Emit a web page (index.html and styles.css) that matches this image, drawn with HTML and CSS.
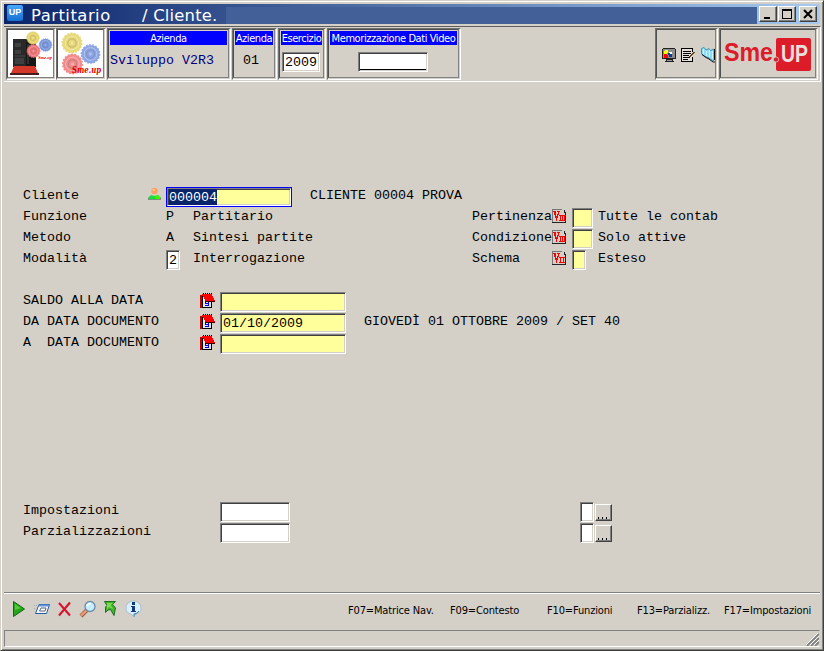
FILE: index.html
```html
<!DOCTYPE html>
<html lang="it">
<head>
<meta charset="utf-8">
<title>Partitario / Cliente.</title>
<link rel="stylesheet" href="styles.css">
</head>
<body>
<svg width="0" height="0" class="defs">
  <defs>
    <g id="gear">
      <circle r="9.8" fill="none" stroke="currentColor" stroke-width="1.4" stroke-dasharray="2 1.4"/>
      <circle r="9.7" fill="currentColor"/>
      <circle r="6.8" fill="none" stroke="#fff" stroke-opacity=".35"/>
      <circle r="4.2" fill="none" stroke="#555" stroke-opacity=".22" stroke-width="1.2"/>
      <circle r="1.5" fill="#fff" fill-opacity=".35"/>
    </g>
    <g id="vm" shape-rendering="crispEdges">
      <path d="M0 0H11L14 3V14H0Z" fill="#d4d0c8"/>
      <path d="M0 0H10V1H1V13H0Z" fill="#777"/>
      <path d="M12 1H13V3H14V14H0V13H13V4H12Z" fill="#222"/>
      <path d="M1 2H4V3H3V5H4V8H5V5H6V3H5V2H8V3H7V6H6V9H5V12H4V9H3V6H2V3H1Z" fill="#f00"/>
      <path d="M2 3H4V7H5V10H4V8H3V5H2Z" fill="#f00"/>
    </g>
    <path id="bars3" shape-rendering="crispEdges" fill="#f00" d="M7 6H14V7H13V11H14V12H7V11H8V7H7ZM9 7V11H10V7ZM11 7V11H12V7Z" fill-rule="evenodd"/>
    <path id="bars2" shape-rendering="crispEdges" fill="#f00" d="M7 6H13V7H12V11H13V12H7V11H8V7H7ZM9 7V11H11V7Z" fill-rule="evenodd"/>
    <g id="cal" shape-rendering="crispEdges">
      <path d="M0 2H2V15H0Z" fill="#c00000"/>
      <path d="M2 2H3V15H2ZM3 14H12V15H3ZM11 7H12V15H11ZM3 0H4V2H3ZM5 0H6V2H5ZM7 0H8V2H7ZM9 0H10V2H9ZM11 0H12V2H11Z" fill="#000"/>
      <path d="M3 4H11V14H3Z" fill="#e4e4e4"/>
      <path d="M2 1H12V3H13V5H14V7H15V8H5V6H4V4H3V3H2Z" fill="#f00"/>
      <path d="M5 8H15V9H5Z" fill="#300"/>
      <path d="M5 9H6V10H8V9H9V13H5V12H8V11H5Z" fill="#0000f0"/>
    </g>
  </defs>
</svg>
<div class="window">
  <header class="titlebar">
    <span class="up-icon">UP</span>
    <h1><span class="title-a">Partitario</span><span class="title-b">/ Cliente.</span></h1>
    <span class="title-space"></span>
    <button class="wbtn"><svg width="16" height="14"><path d="M4 10H10V12H4Z"/></svg></button>
    <button class="wbtn"><svg width="16" height="14"><path d="M3 2H13V12H3ZM4 4V11H12V4Z" fill-rule="evenodd"/></svg></button>
    <button class="wbtn close"><svg width="16" height="14"><path d="M4 3L12 11M12 3L4 11" fill="none" stroke="#000" stroke-width="2"/></svg></button>
  </header>

  <div class="toolbar">
    <div class="cell c1"><div class="inner white">
      <svg width="46" height="47" viewBox="0 0 46 47">
        <path d="M5 9H18V37H5Z" fill="#292929"/><path d="M18 9H28V37H18Z" fill="#171717"/>
        <path d="M7 13H13V17H7ZM7 20H13V24H7ZM7 28H16V34H7Z" fill="#404040"/><path d="M7 26H17M20 14V34" stroke="#4a4a4a"/>
        <path d="M6 36H27L30 43H3Z" fill="#d4382a"/><path d="M2 43H31V45H2Z" fill="#4b1c1c"/>
        <g color="#e5d36a" transform="translate(25 8) scale(.64)"><use href="#gear"/></g>
        <g color="#7896dc" transform="translate(37.500 15) scale(.64)"><use href="#gear"/></g>
        <g color="#ec7477" transform="translate(25.500 21) scale(.66)"><use href="#gear"/></g>
        <text x="30" y="29" textLength="14" lengthAdjust="spacingAndGlyphs" class="tiny-logo">Sme.up</text>
      </svg></div></div>
    <div class="cell c2"><div class="inner white">
      <svg width="46" height="47" viewBox="0 0 46 47">
        <g color="#e8d979" transform="translate(14 13)"><use href="#gear"/></g>
        <g color="#8da5e5" transform="translate(32.500 24) scale(.94)"><use href="#gear"/></g>
        <g color="#f28b8b" transform="translate(14.500 34)"><use href="#gear"/></g>
        <text x="14" y="43" textLength="29" lengthAdjust="spacingAndGlyphs" class="small-logo">Sme.up</text>
      </svg></div></div>
    <div class="cell c3"><div class="inner"><div class="cap">Azienda</div><div class="company">Sviluppo V2R3</div></div></div>
    <div class="cell c4"><div class="inner"><div class="cap">Azienda</div><div class="code">01</div></div></div>
    <div class="cell c5"><div class="inner"><div class="cap">Esercizio</div><div class="field year">2009</div></div></div>
    <div class="cell c6"><div class="inner"><div class="cap">Memorizzazione Dati Video</div><div class="field memo"></div></div></div>
    <div class="cell c7"><div class="inner tools">
      <svg width="14" height="14" shape-rendering="crispEdges"><path d="M1 0H13V1H14V11H11V13H12V14H3V13H4V11H0V1H1Z" fill="#222"/><path d="M1 1H13V10H1Z" fill="#8c8c8c"/><path d="M2 3H3V2H6V5H5V6H2Z" fill="#ff0"/><path d="M2 6H5V7H6V10H2Z" fill="#f00"/><path d="M6 5H8V6H10V9H7V7H6Z" fill="#003d99"/><path d="M7 4H10V6H8V5H7Z" fill="#fff"/><path d="M5 12H10V13H5Z" fill="#999"/></svg>
      <svg width="14" height="14" shape-rendering="crispEdges"><path d="M1 1H11V13H1Z" fill="#e5e1d9"/><path d="M0 0H12V4H11V1H1V13H11V9H12V14H0Z"/><path d="M2 3H10V4H2ZM2 5H10V6H2ZM2 7H8V8H2ZM2 9H9V10H2ZM2 11H7V12H2Z"/><path d="M12 4H14V5H13V6H12V7H11V8H10V9H8V8H9V7H10V6H11V5H12Z" fill="#6b4511"/></svg>
      <svg width="15" height="16"><path d="M.5 1.500L3 .5L5 3L8 1.500L9.500 3.500L13 2V13L12 14L8 11L4 9.500L.5 7Z" fill="#8fdcf8" stroke="#4394b4"/><path d="M2.500 2V7M5.500 4V9M8.500 3V10M11.500 4V12" stroke="#c9f3ff"/><path d="M1 7.500L5 10.500L8 12L12 15H14.500V12M13.500 2V13" fill="none" stroke="#111"/></svg>
    </div></div>
    <div class="cell c8"><div class="inner brand">
      <svg width="94" height="40"><rect x="52" y="3" width="35" height="33" rx="2" fill="#dc1d29"/><text x="0" y="26" textLength="49" lengthAdjust="spacingAndGlyphs" class="brand-red">Sme</text><circle cx="52" cy="24.500" r="2.600" fill="#dc1d29" stroke="#d4d0c8" stroke-width=".8"/><text x="57" y="27" textLength="27" lengthAdjust="spacingAndGlyphs" class="brand-up">UP</text></svg>
    </div></div>
  </div>

  <main>
    <section class="params">
      <div class="prow">
        <span>Cliente</span>
        <svg class="person" width="13" height="14"><circle cx="6.5" cy="4" r="3.2" fill="#ff9e62"/><path d="M4 2H7V4H5Z" fill="#ffc28b"/><path d="M0 13V11L3 8L6.5 9L10 8L13 11V13Z" fill="#14df3b"/><path d="M7 9L10 8L12 10V12H8Z" fill="#48f000"/><path d="M0 12.5H13M.5 10.5V13M12.5 10.5V13" stroke="#7d9180"/></svg>
        <div class="focus wide"><div class="field yellow"><span class="sel">000004</span></div></div>
        <span class="to-end">CLIENTE 00004 PROVA</span>
      </div>
      <div class="prow">
        <span>Funzione</span><i></i><span>P</span><span class="two">Partitario</span>
        <span>Pertinenza</span><svg width="15" height="15"><use href="#vm"/><use href="#bars3"/></svg>
        <div class="field yellow w20"></div><span>Tutte le contab</span>
      </div>
      <div class="prow">
        <span>Metodo</span><i></i><span>A</span><span class="two">Sintesi partite</span>
        <span>Condizione</span><svg width="15" height="15"><use href="#vm"/><use href="#bars3"/></svg>
        <div class="field yellow w20"></div><span>Solo attive</span>
      </div>
      <div class="prow">
        <span>Modalità</span><i></i><div class="field w13">2</div><span class="two">Interrogazione</span>
        <span>Schema</span><svg width="15" height="15"><use href="#vm"/><use href="#bars2"/></svg>
        <div class="field yellow w13"></div><span>Esteso</span>
      </div>
    </section>

    <section class="dates">
      <div class="drow"><span>SALDO ALLA DATA</span><svg width="15" height="16"><use href="#cal"/></svg><div class="field yellow date"></div></div>
      <div class="drow"><span>DA DATA DOCUMENTO</span><svg width="15" height="16"><use href="#cal"/></svg><div class="field yellow date">01/10/2009</div><span>GIOVEDÌ 01 OTTOBRE 2009 / SET 40</span></div>
      <div class="drow"><span>A  DATA DOCUMENTO</span><svg width="15" height="16"><use href="#cal"/></svg><div class="field yellow date"></div></div>
    </section>

    <section class="settings">
      <div class="srow"><span>Impostazioni</span><div class="field w69"></div><div class="field w13"></div><button class="more"><i></i><i></i><i></i></button></div>
      <div class="srow"><span>Parzializzazioni</span><div class="field w69"></div><div class="field w13"></div><button class="more"><i></i><i></i><i></i></button></div>
    </section>
  </main>

  <footer>
    <div class="actions">
      <svg width="16" height="18"><path d="M1.5 1.5L12.5 9L1.5 16.5Z" fill="#25a51a" stroke="#126615"/><path d="M3 4V10L9 8Z" fill="#55c83b"/></svg>
      <svg width="17" height="18"><path d="M5 4.5H15.5L12.5 13.5H1.5Z" fill="#f4faff" stroke="#275b9c"/><path d="M4.500 5.5H15" stroke="#6595d8" stroke-width="2"/><path d="M7 8H12L11 11H5.5Z" fill="#fff" stroke="#5a6670"/><path d="M0 5.5H3M0 8.5H2" stroke="#aaa" stroke-dasharray="1 1"/></svg>
      <svg width="16" height="18"><path d="M2 3L13 15.5M13 2.5L2 15.5" stroke="#d8142e" stroke-width="2.1"/></svg>
      <svg width="18" height="18"><path d="M8 10L2 16" stroke="#8c5c4c" stroke-width="4"/><path d="M8 10L2 15.5" stroke="#ed9868" stroke-width="2.4"/><circle cx="11" cy="6.500" r="5" fill="#c7eeff" stroke="#6c8aaa" stroke-width="1.3"/><path d="M8 6Q9 3 12 3.5" fill="none" stroke="#fff" stroke-width="1.5"/></svg>
      <svg width="16" height="18"><path d="M1.500 1.500H12.500L9.500 4.500L12.500 8L11 15.500L7.500 9.500L5 10L2.500 12.500V7L4 5.500Z" fill="#40b82a" stroke="#206c20"/><path d="M4 3H10L7.500 5L10 9L6 7L4 9Z" fill="#7cdc4e"/></svg>
      <svg width="18" height="18"><path d="M8 1C13 1 16 4 16 8C16 12 13 14 10 14L9 17L6 14C2 13 1 11 1 8C1 4 4 1 8 1Z" fill="#d7efff" stroke="#a6bdd0"/><path d="M14 11Q12 14 9 14V16.5" fill="none" stroke="#397ba4"/><path d="M7 2H10V5H7ZM6 6H10V11H11V12H6V11H7V7H6Z" fill="#123a7a"/></svg>
    </div>
    <div class="keys"><span>F07=Matrice Nav.</span><span>F09=Contesto</span><span>F10=Funzioni</span><span>F13=Parzializz.</span><span>F17=Impostazioni</span></div>
  </footer>
  <div class="status"><svg width="13" height="13"><path d="M1 13L13 1M5 13L13 5M9 13L13 9" stroke="#808080" stroke-width="1.8"/><path d="M0 12L12 0M4 12L13 3M8 12L13 7" stroke="#fff"/></svg></div>
</div>
</body>
</html>
```
FILE: styles.css
```css
* { box-sizing: border-box; }
body { margin: 0; overflow: hidden; background: #d4d0c8; color: #000; font: 13.333px/16px "Liberation Mono", monospace; }
svg { display: block; flex: none; }
button { padding: 0; font: inherit; border-radius: 0; }
.defs { position: absolute; }

.window { width: 824px; height: 651px; padding: 3px 2px 0 3px; background: #d4d0c8; border: 1px solid; border-color: #d4d0c8 #404040 #404040 #d4d0c8; box-shadow: inset 1px 1px #fff, inset -1px -1px #808080; display: flex; flex-direction: column; }

.titlebar { height: 20px; margin-right: 1px; display: flex; align-items: center; background: linear-gradient(90deg, #0a246a, #a6caf0); color: #fff; }
.up-icon { width: 16px; height: 16px; margin: -3px 0 0 3px; background: linear-gradient(#48a8f8, #176fd0); border-radius: 2px; font: bold 9px/15px "Liberation Sans", sans-serif; text-align: center; }
h1 { display: flex; margin: 3px 0 0; width: 203px; padding-left: 8px; font: 16.4px/20px "DejaVu Sans", sans-serif; white-space: pre; }
.title-a { width: 111px; letter-spacing: .5px; }
.title-b { letter-spacing: .2px; }
.title-space { width: 531px; height: 17px; align-self: flex-end; background: #446099; margin-right: 2px; }
.wbtn { width: 18px; height: 16px; margin-right: 1px; background: #d4d0c8; border: 1px solid; border-color: #fff #404040 #404040 #fff; box-shadow: inset -1px -1px #808080; }
.wbtn.close { margin-left: 2px; }

.toolbar { height: 56px; margin-top: 2px; padding: 1px 2px 1px 2px; border-top: 1px solid #606060; border-bottom: 1px solid #fff; border-right: 1px solid #fff; display: flex; }
.cell { flex: none; height: 52px; border: 1px solid; border-color: #707070 #fff #fff #707070; margin-right: 1px; padding: 0 1px 1px 0; }
.inner { height: 100%; border: 1px solid; border-color: #505050 #808080 #808080 #505050; overflow: hidden; }
.white { background: #fff; }
.c1, .c2 { width: 50px; }
.c1 { margin-right: 0; }
.c3 { width: 124px; }
.c4 { width: 45px; }
.c5 { width: 48px; }
.c6 { width: 134px; margin-right: 194px; }
.c7 { width: 63px; }
.c8 { width: 99px; margin: 0; }
.cap { margin: 1px; height: 14px; background: #00f; color: #fff; text-align: center; font: 11px/15px "DejaVu Sans Condensed", "DejaVu Sans", sans-serif; font-stretch: condensed; letter-spacing: -.42px; white-space: nowrap; }
.company { padding: 7px 0 0 1px; color: #000080; }
.code { padding: 7px 0 0 9px; }
.field { height: 20px; padding-left: 2px; background: #fff; border: 1px solid; border-color: #808080 #fff #fff #808080; box-shadow: inset 1px 1px #404040, inset -1px -1px #d4d0c8; line-height: 20px; white-space: pre; }
.yellow { background: #ffff9c; }
.year { width: 38px; margin: 7px 0 0 2px; }
.memo { width: 70px; margin: 7px 0 0 29px; box-shadow: inset 1px 1px #404040, inset -1px -1px #d4d0c8, inset 0 -2px #000; }
.tools { display: flex; align-items: center; gap: 5px; padding: 3px 0 0 5px; }
.tools svg:last-child { margin-left: 1px; }
.brand { padding: 5px 0 0 3px; }
.brand-red, .brand-up { font: bold 26px "Liberation Sans", sans-serif; fill: #dc1d29; }
.brand-up { font-size: 23px; fill: #e8dedb; }
.tiny-logo, .small-logo { font: italic bold 5px "Liberation Serif", serif; fill: #e00000; }
.small-logo { font: italic bold 9px "DejaVu Serif", serif; }

main { height: 510px; padding: 105px 0 0 19px; }
main span { white-space: pre; }
main span:not(.sel) { margin-top: 1px; }
.prow { display: grid; grid-template-columns: 124px 19px 27px 117px 162px 80px 20px 26px auto; height: 21px; }
.prow > svg:not(.person), .drow > svg { margin-top: 1px; }
.wide, .two { grid-column: span 2; }
.to-end { grid-column: span 5; }
.person { margin-left: 1px; }
.focus { width: 126px; height: 20px; border: 1px solid #00f; }
.focus .field { height: 18px; padding-left: 1px; line-height: 17px; }
.sel { display: inline-block; height: 16px; background: #0a246a; color: #fff; }
.w20 { width: 21px; }
.w13 { width: 14px; }
.w69 { width: 70px; }
.dates { margin-top: 21px; }
.drow { display: grid; grid-template-columns: 177px 20px 144px auto; height: 21px; }
.date { width: 126px; }
.settings { margin-top: 147px; }
.srow { display: grid; grid-template-columns: 197px 360px 15px auto; height: 21px; }
.more { width: 17px; height: 17px; margin-top: 2px; display: flex; align-items: flex-end; gap: 3px; padding: 0 0 1px 2px; background: #d4d0c8; border: 1px solid; border-color: #fff #404040 #404040 #fff; box-shadow: inset -1px -1px #808080; }
.more i { width: 1px; height: 2px; background: #000; }

footer { height: 38px; margin-right: 1px; border-top: 1px solid #808080; box-shadow: inset 0 1px #fff; display: flex; justify-content: space-between; padding: 7px 9px 0 8px; }
.actions { display: flex; gap: 6px; }
.keys { display: grid; grid-template-columns: 102px 97px 90px 87px 87px; font: 11px/21px "DejaVu Sans Condensed", "DejaVu Sans", sans-serif; font-stretch: condensed; letter-spacing: -.15px; white-space: nowrap; }
.status { height: 17px; margin-right: 1px; border: 1px solid; border-color: #808080 transparent #fff #808080; display: flex; justify-content: flex-end; align-items: flex-end; }
```
